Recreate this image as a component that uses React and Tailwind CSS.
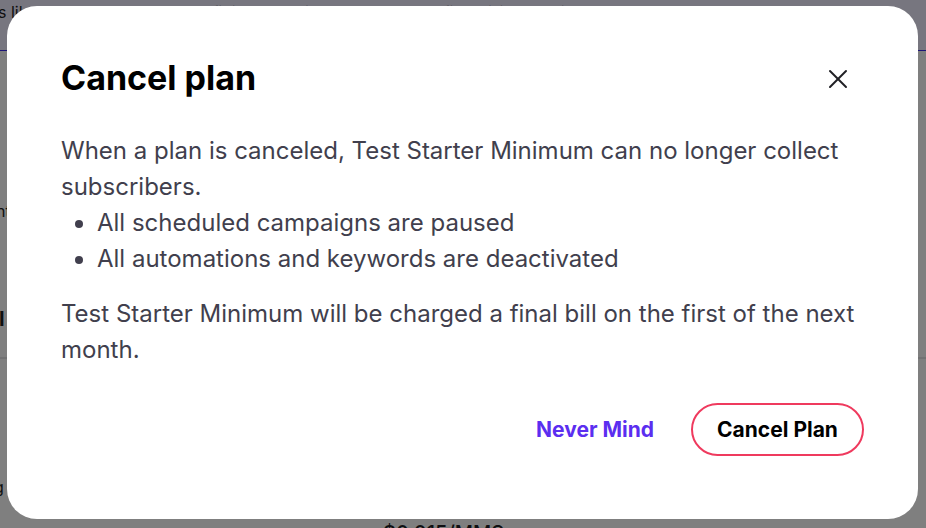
import { X } from "lucide-react";

function Backdrop() {
  return (
    <div className="h-[528px] w-[926px] overflow-hidden bg-white font-['Inter',sans-serif] text-[#1f1f24]">
      <div className="h-[51px] border-b border-[#3a2bf0] bg-[#efedff] pt-[2px] text-[16px] leading-[20px]">
        <p className="-ml-[2px] whitespace-nowrap">
          s like the plan that you have finished setting up, please confirm billing details below
        </p>
      </div>
      <div className="flex flex-col">
        <p className="-ml-[4px] mt-[150px] text-[16px] leading-[20px]">nt</p>
        <p className="-ml-[1px] mt-[86px] text-[20px] font-bold leading-[24px]">I</p>
        <div className="mt-[26px] h-[2px] bg-[#e4e4e7]" />
        <p className="-ml-[6px] mt-[118px] text-[16px] leading-[20px]">g</p>
        <p className="ml-[383px] mt-[24px] text-[20px] font-medium leading-[24px]">$0.015/MMS</p>
      </div>
    </div>
  );
}

export default function App() {
  return (
    <div className="relative h-[528px] w-[926px] overflow-hidden">
      <Backdrop />
      <div className="fixed inset-0 bg-black/50 pl-[7px] pt-[6px] font-['Inter',sans-serif]">
        <div className="flex h-[513px] w-[911px] flex-col rounded-[30px] bg-white px-[54px] pt-[52px]">
          <div className="flex items-center justify-between">
            <h2 className="text-[34px] font-bold leading-[40px] text-black">Cancel plan</h2>
            <button className="mr-[10px] mt-[1px] flex h-[32px] w-[32px] items-center justify-center text-[#1f1f24]">
              <X size={32} strokeWidth={1.5} />
            </button>
          </div>
          <div className="mt-[35px] text-[24px] leading-[36px] text-[#413f4d]">
            <p>When a plan is canceled, Test Starter Minimum can no longer collect subscribers.</p>
            <ul className="list-disc pl-[36px]">
              <li>All scheduled campaigns are paused</li>
              <li>All automations and keywords are deactivated</li>
            </ul>
            <p className="mt-[19px]">
              Test Starter Minimum will be charged a final bill on the first of the next month.
            </p>
          </div>
          <div className="mt-[35px] flex items-center justify-end gap-[37px]">
            <button className="text-[21px] font-bold text-[#5b2ef0]">Never Mind</button>
            <button className="h-[53px] w-[173px] rounded-full border-[2.5px] border-[#ef3a5e] text-[21px] font-bold text-black">
              Cancel Plan
            </button>
          </div>
        </div>
      </div>
    </div>
  );
}
